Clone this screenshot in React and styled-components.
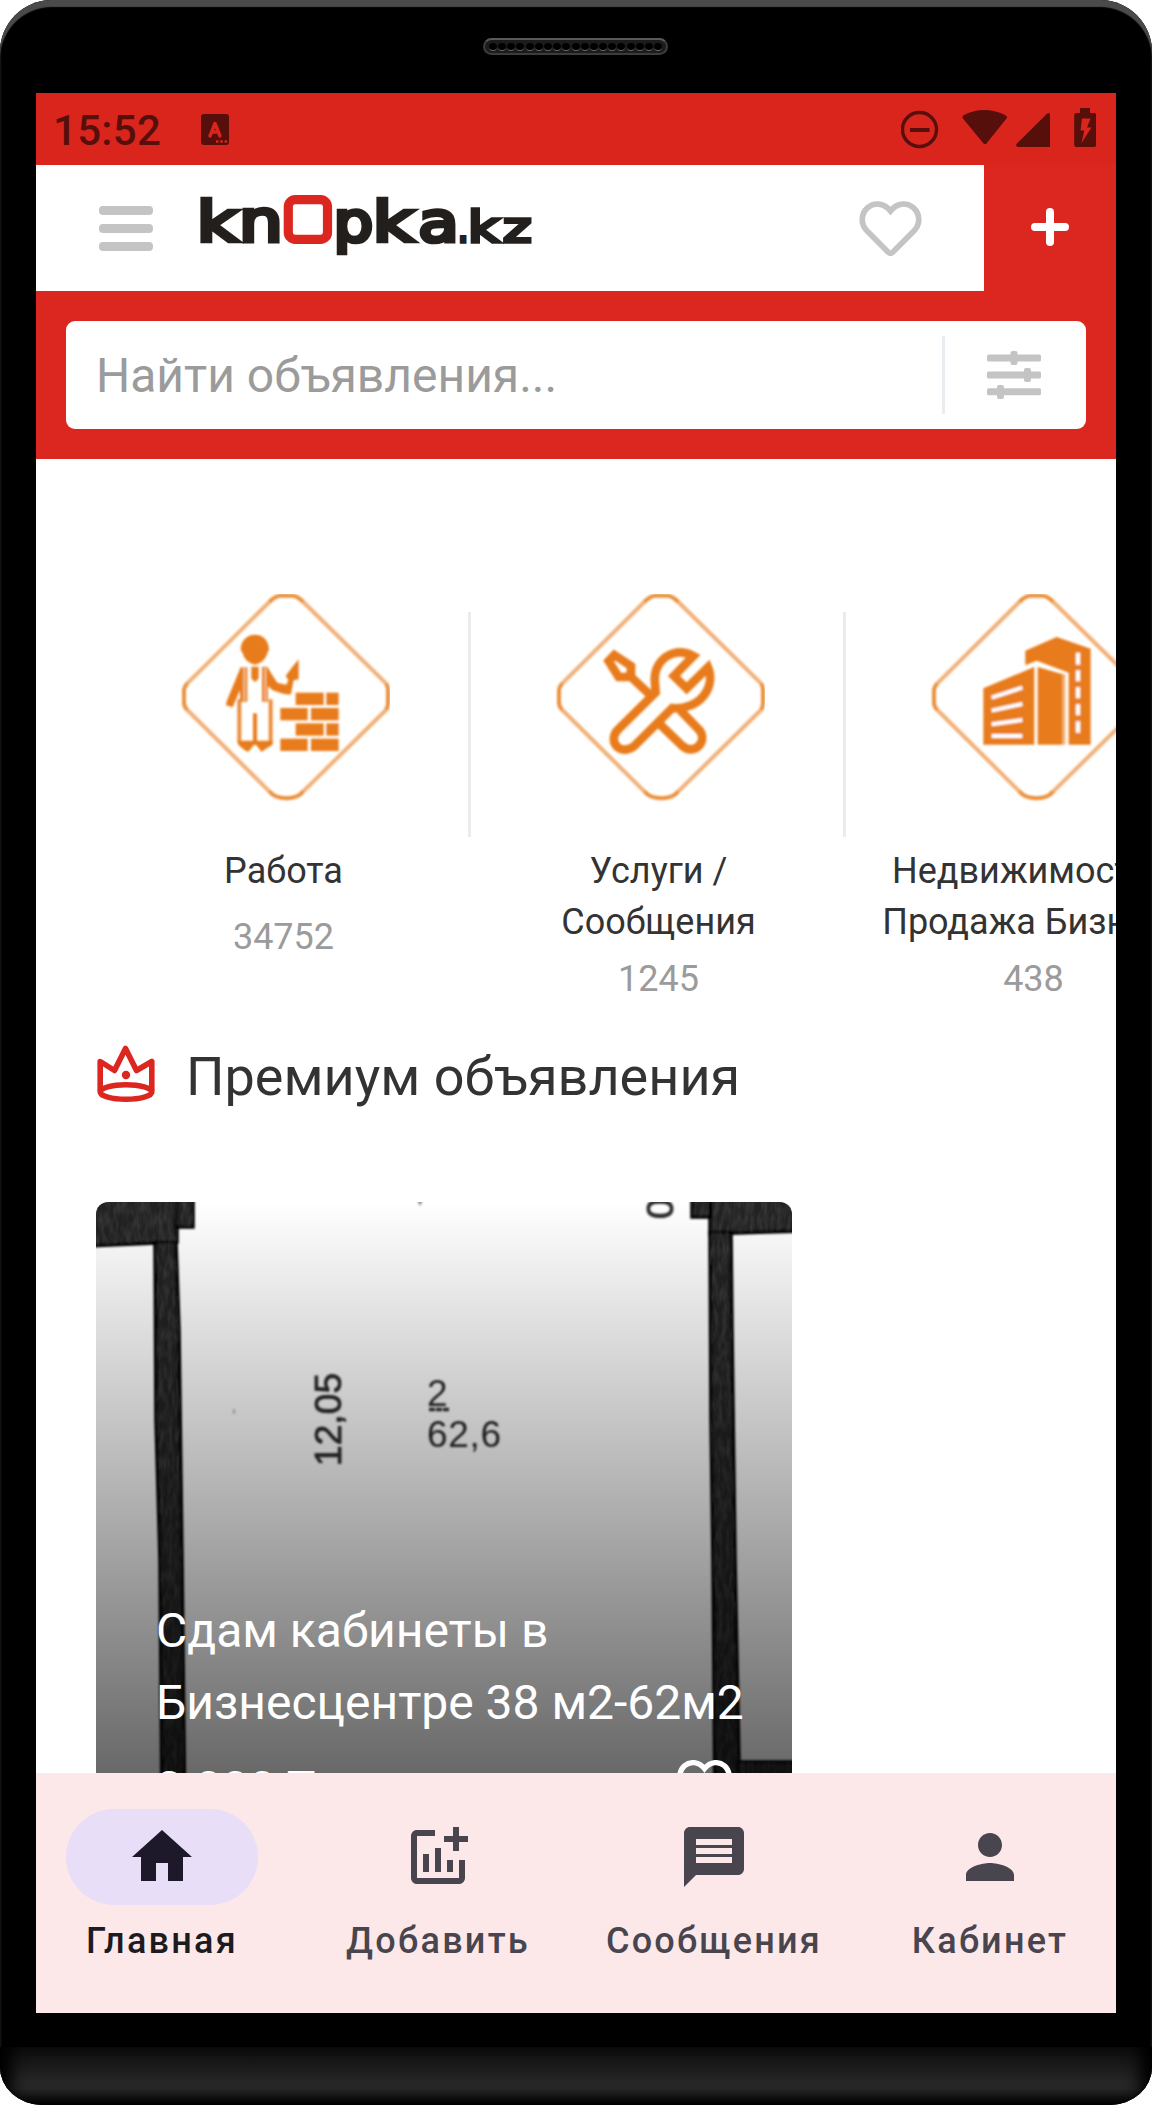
import React from "react";
import styled, { createGlobalStyle } from "styled-components";

const RED = "#db2720";
const STATUS_RED = "#da251d";
const DARK_RED = "#570f0c";
const GREY = "#c4c4c4";
const ORANGE = "#e87c1b";

const GlobalStyle = createGlobalStyle`
  *, *::before, *::after { box-sizing: border-box; }
  html, body { margin: 0; background: #fff; }
  body { font-family: Roboto, "Noto Sans", sans-serif; }
  svg { display: block; flex: none; }
`;

const Phone = styled.div`
  width: 1152px;
  height: 2105px;
  display: flex;
  flex-direction: column;
  background: #000;
  border-radius: 52px 52px 42px 42px / 52px 52px 38px 38px;
  overflow: hidden;
  box-shadow: inset 0 7px 1px #4a4a4a, inset 1px 0 2px #141414, inset -1px 0 2px #141414;
`;

const Bezel = styled.div`
  height: 93px;
  flex: none;
  display: flex;
  justify-content: center;
  padding: 38px 1px 0 0;
`;

const Speaker = styled.div`
  width: 185px;
  height: 17px;
  border-radius: 9px;
  border: 2px solid #3c3c3c;
  border-top-color: #5a5a5a;
  background: #1c1c1c;
  display: flex;
  align-items: center;
  justify-content: center;
  gap: 1.2px;
`;

const Hole = styled.span`
  width: 8px;
  height: 8px;
  border-radius: 50%;
  background: #000;
  border-bottom: 1px solid #6a6a6a;
`;

const Chin = styled.div`
  margin-top: 34px;
  height: 58px;
  flex: none;
  background: linear-gradient(#0c0c0c, #262626 60%, #262626 72%, #000);
  box-shadow: inset 22px 0 16px -10px #000, inset -22px 0 16px -10px #000;
`;

const Screen = styled.main`
  width: 1080px;
  height: 1920px;
  flex: none;
  margin: 0 auto;
  background: #fff;
  display: flex;
  flex-direction: column;
  overflow: hidden;
`;

const StatusBar = styled.div`
  height: 72px;
  flex: none;
  display: flex;
  align-items: center;
  padding: 0 20px 0 17px;
  background: ${STATUS_RED};
  color: ${DARK_RED};
`;

const Clock = styled.span`
  font-size: 42px;
  font-weight: 500;
  line-height: 49px;
  letter-spacing: 0.3px;
  width: 148px;
  padding-top: 3px;
`;

const StatusIcons = styled.div`
  margin-left: auto;
  display: flex;
`;

const Header = styled.header`
  height: 126px;
  flex: none;
  display: flex;
`;

const Brand = styled.div`
  flex: 1;
  display: flex;
  align-items: center;
  padding: 0 62px 0 63px;
`;

const Burger = styled.div`
  display: flex;
  flex-direction: column;
  gap: 9px;
  width: 54px;
  margin-right: 44px;
`;

const BurgerBar = styled.span`
  height: 9px;
  border-radius: 4px;
  background: ${GREY};
`;

const HeaderHeart = styled.div`
  margin-left: auto;
  padding-top: 1px;
`;

const AddButton = styled.div`
  width: 132px;
  background: ${RED};
  display: flex;
  align-items: center;
  justify-content: center;
  padding-bottom: 2px;
`;

const SearchBand = styled.div`
  height: 168px;
  flex: none;
  padding: 30px;
  background: ${RED};
`;

const SearchBox = styled.div`
  height: 108px;
  border-radius: 9px;
  background: #fff;
  display: flex;
  align-items: center;
`;

const Placeholder = styled.span`
  flex: 1;
  padding-left: 30px;
  font-size: 48px;
  line-height: 57px;
  color: #9b9b9b;
`;

const SearchDivider = styled.span`
  width: 3px;
  height: 78px;
  background: #e7edf1;
`;

const FilterSlot = styled.div`
  width: 141px;
  display: flex;
  justify-content: center;
  padding-right: 3px;
`;

const Content = styled.div`
  flex: 1;
  min-height: 0;
  overflow: hidden;
`;

const Categories = styled.div`
  height: 586px;
  padding: 135px 0 0 60px;
  display: flex;
`;

const Category = styled.div`
  flex: none;
  width: 375px;
  display: flex;
`;

const CategoryBody = styled.div`
  width: 372px;
  padding-left: 3px;
  display: flex;
  flex-direction: column;
  align-items: center;
`;

const CategoryRule = styled.span`
  width: 3px;
  height: 225px;
  margin-top: 18px;
  background: #ebebeb;
`;

const CategoryName = styled.div`
  margin-top: 42px;
  min-height: 60px;
  font-size: 36px;
  line-height: 51px;
  text-align: center;
  white-space: pre;
  color: #333;
`;

const CategoryCount = styled.div`
  margin-top: 10px;
  font-size: 36px;
  line-height: 42px;
  color: #9b9b9b;
`;

const SectionTitle = styled.h2`
  margin: 0 0 94px;
  padding-left: 60px;
  height: 63px;
  display: flex;
  gap: 29px;
  font-size: 54px;
  line-height: 63px;
  font-weight: 400;
  color: #333;
`;

const Card = styled.article`
  width: 696px;
  height: 720px;
  margin-left: 60px;
  border-radius: 12px;
  overflow: hidden;
  display: grid;
  > * { grid-area: 1 / 1; }
`;

const CardText = styled.div`
  padding: 393px 0 0 60px;
  z-index: 1;
  color: #fff;
  background: linear-gradient(rgba(0, 0, 0, 0), rgba(0, 0, 0, 0.745));
  font-size: 48px;
  line-height: 72px;
`;

const CardTitle = styled.div`
  white-space: pre;
`;

const PriceRow = styled.div`
  margin-top: 14px;
  padding-right: 60px;
  display: flex;
  justify-content: space-between;
  align-items: flex-start;
  svg { margin-top: 7px; }
`;

const NavBar = styled.nav`
  height: 240px;
  flex: none;
  display: flex;
  gap: 24px;
  background: #fce8e9;
`;

const NavItem = styled.div`
  flex: 1;
  padding-top: 36px;
  display: flex;
  flex-direction: column;
  align-items: center;
  color: ${(p) => (p.$active ? "#1c1b1f" : "#49454f")};
`;

const NavPill = styled.div`
  width: 192px;
  height: 96px;
  border-radius: 48px;
  display: flex;
  align-items: center;
  justify-content: center;
  background: ${(p) => (p.$active ? "#e8def7" : "transparent")};
  color: ${(p) => (p.$active ? "#1d192b" : "inherit")};
`;

const NavLabel = styled.span`
  margin-top: 12px;
  font-size: 36px;
  font-weight: 500;
  line-height: 48px;
  letter-spacing: 2.25px;
  white-space: nowrap;
`;

const KeyboardIcon = () => (
  <svg width="28" height="31" viewBox="0 0 28 31">
    <rect width="28" height="31" rx="3" fill={DARK_RED} />
    <path d="M9 22 14 9.500 19 22M10.500 18H17.500" fill="none" stroke={STATUS_RED} strokeWidth="3.400" strokeLinecap="round" strokeLinejoin="round" />
    <path d="M15 27.500h2.500M19.300 27.500h2.500M23.600 27.500h2.500" stroke={STATUS_RED} strokeWidth="2.300" />
  </svg>
);

const SystemIcons = () => (
  <svg width="195" height="42" viewBox="0 0 195 42" fill={DARK_RED}>
    <circle cx="18.500" cy="21.500" r="17" fill="none" stroke={DARK_RED} strokeWidth="3.400" />
    <rect x="9" y="20" width="19.500" height="4" />
    <path d="M62 10.500Q60.500 8.500 63 7Q83 -3 104 7Q107 8.500 105.500 10.500L85.500 35.500Q84 37 82.500 35.500Z" />
    <path d="M117 39Q114 38 116 35.500L146 5.700Q149 4 149 7V39Z" />
    <path fillRule="evenodd" d="M179 0h10v5h4q2.300 0 2.300 2.300V36.500q0 2.500-2.300 2.500h-17.500q-2.300 0-2.300-2.500V7.300q0-2.300 2.300-2.300H179ZM181 10.500 179.500 22.500h3.800L180.500 35 190.500 19.500h-4.500L189.500 10.500Z" />
  </svg>
);

const HeartIcon = ({ width, color, stroke }) => (
  <svg width={width} height={(width * 55) / 62} viewBox="0 0 62 55" fill="none">
    <path
      d="M31 9.800C38 1.200 47.500 1.500 53.500 6.500C60.500 13 60.500 23 54 29.500L33.500 50.200Q31 52.500 28.500 50.200L8 29.500C1.500 23 1.500 13 8.500 6.500C14.500 1.500 24 1.200 31 9.800Z"
      stroke={color}
      strokeWidth={stroke}
    />
  </svg>
);

const LOGO_LETTERS = [
  { ch: "k", x: 0, w: 39, size: 56, box: 0.49, bear: 0.091 },
  { ch: "n", x: 42, w: 36, size: 56, box: 0.458, bear: 0.091 },
  { ch: "p", x: 136, w: 35, size: 56, box: 0.489, bear: 0.091 },
  { ch: "k", x: 176, w: 39, size: 56, box: 0.49, bear: 0.091 },
  { ch: "a", x: 219, w: 35, size: 56, box: 0.462, bear: 0.06 },
  { ch: ".", x: 258.500, w: 8, size: 43, box: 0.124, bear: 0.107 },
  { ch: "k", x: 270, w: 30, size: 43, box: 0.49, bear: 0.091 },
  { ch: "z", x: 302.500, w: 27.500, size: 43, box: 0.439, bear: 0.043 },
];

const Logo = () => (
  <svg width="339" height="90" viewBox="-4 -9 339 90" overflow="visible" role="img" aria-label="knOpka.kz">
    <rect x="87.300" y="7.600" width="39.200" height="39.800" rx="7" fill="none" stroke={RED} strokeWidth="9.200" />
    {LOGO_LETTERS.map((l, i) => {
      const pen = l.size > 50 ? 4.4 : 3.6;
      const sx = (l.w - pen) / (l.box * l.size);
      return (
        <text
          key={i}
          transform={`translate(${l.x + pen / 2 - l.bear * l.size * sx} ${51.5 - pen / 2}) scale(${sx} 1)`}
          fontFamily="'DejaVu Sans', sans-serif"
          fontSize={l.size}
          fill="#231f1c"
          stroke="#231f1c"
          strokeWidth={pen}
        >
          {l.ch}
        </text>
      );
    })}
  </svg>
);

const FilterIcon = () => (
  <svg width="54" height="49" viewBox="0 0 54 49" fill={GREY}>
    <rect y="3.500" width="54" height="7" rx="1.500" />
    <rect y="20.500" width="54" height="7" rx="1.500" />
    <rect y="37.300" width="54" height="7" rx="1.500" />
    <rect x="23.500" width="7" height="14" rx="2" />
    <rect x="37" y="17" width="7" height="14" rx="2" />
    <rect x="10" y="34" width="7" height="14" rx="2" />
  </svg>
);

const CrownIcon = () => (
  <svg width="61" height="63" viewBox="0 0 61 63" fill="none" stroke={RED} strokeWidth="5.600" strokeLinejoin="round">
    <path d="M4.200 46V16.500L18.500 25.500 29.500 3.500 40.500 25.500 55.800 16.500V46" />
    <ellipse cx="30" cy="47" rx="25.800" ry="7.300" />
    <circle cx="30" cy="30" r="4.200" fill={RED} stroke="none" />
  </svg>
);

const Diamond = ({ children, dx }) => (
  <svg width="213" height="210" viewBox="-9 0 639 630">
    <g fill="none" stroke={ORANGE} filter="url(#soft)">
      <path opacity="0.600" d="M22 268 268 24M370 24 618 268M618 348 370 592M268 592 22 348" strokeWidth="12" />
      <path opacity="0.850" strokeWidth="12" d="M22 268Q12 280 12 290V326Q12 338 22 348M268 24Q286 5 302 5H336Q352 5 370 24M618 268Q624 276 624 288V326Q624 340 618 348M370 592Q354 613 320 613Q284 613 268 592" />
    </g>
    <g transform={`translate(${dx} -72)`} filter="url(#soft)">
      {children}
    </g>
  </svg>
);

const WorkerIcon = () => (
  <Diamond dx={-90}>
    <g fill={ORANGE}>
      <path d="M272 240c0-28 18-46 43-46s42 18 42 46l-5 9c-3 17-18 31-37 35-19-4-34-18-37-35z" />
      <path d="M272 292h20v103h-22v-35l-22 52-20-6 2-12z" />
      <path d="M304 290h22v35l-11 12-11-12z" />
      <path d="M336 290h16q16 28 30 48l27 6 6-14-8-12q18-26 39-50v60l-15 3-8 42q-14 4-55-12l-14-12v46h-18z" />
      <path d="M262 512h106v12l-22 14-11 8-17-22h-6l-17 22-12-6-17-14z" />
      {[368, 460].map((y) => (
        <React.Fragment key={y}>
          <rect x="437" y={y} width="84" height="37" />
          <rect x="529" y={y} width="37" height="37" />
          <rect x="391" y={y + 46} width="82" height="37" />
          <rect x="483" y={y + 46} width="83" height="37" />
        </React.Fragment>
      ))}
    </g>
    <path d="M283 292v100M346 292v100" stroke="#fff" strokeOpacity="0.550" strokeWidth="6" />
    <path d="M268 388V520M362 388V520" stroke={ORANGE} strokeWidth="12" opacity="0.850" />
    <path d="M315 430V525" stroke={ORANGE} strokeWidth="12" />
  </Diamond>
);

const ToolsIcon = () => (
  <Diamond dx={-165}>
    <g fill="none" stroke={ORANGE} strokeWidth="26" strokeLinejoin="round">
      <path d="M343 255 393 288V310L382 321H356L326 273Z" strokeLinejoin="miter" />
      <path d="M388 316 452 376" />
      <path strokeLinejoin="miter" strokeMiterlimit="2" d="M467 367 353 480C338 496 338 517 351 530C366 543 388 541 402 529L517 414C550 418 590 405 612 376C632 350 635 318 624 292L560 355 522 318 580 258Q550 242 520 250C480 262 460 300 465 342Z" />
      <path d="M477 460 546 527C563 543 585 541 598 526C611 511 608 492 597 479L540 420" />
    </g>
  </Diamond>
);

const BuildingsIcon = () => (
  <Diamond dx={-270}>
    <g fill={ORANGE}>
      <path d="M430 355 583 291V524H430Z" />
      <path d="M593 291 666 312V524H593Z" />
      <path d="M556 242 650 201 752 236V524H686V308L590 272 556 286Z" />
      <path opacity="0.600" d="M666 312H676V524H666Z" />
    </g>
    <path d="M455 383 547 353M455 422 547 402M455 463 547 450M455 498H547" stroke="#fff" strokeWidth="12" />
    <path d="M714 248V284M714 301V334M714 352V385M714 403V436M714 454V488" stroke="#fff" strokeWidth="13" />
  </Diamond>
);

const FloorPlan = () => (
  <svg width="696" height="720" viewBox="96 1202 696 720">
    <defs>
      <filter id="scan" x="0" y="0" width="1" height="1">
        <feGaussianBlur stdDeviation="1" />
      </filter>
      <filter id="grain" x="0" y="0" width="1" height="1">
        <feTurbulence type="fractalNoise" baseFrequency="0.22 0.07" numOctaves="2" seed="4" />
        <feColorMatrix values="0 0 0 0 1  0 0 0 0 1  0 0 0 0 1  0.6 0 0 0 -0.2" />
        <feComposite in2="SourceGraphic" operator="in" />
      </filter>
      <filter id="soft">
        <feGaussianBlur stdDeviation="2.4" />
      </filter>
      <g id="walls">
        <path d="M90 1195H177V1242L90 1246Z" />
        <path d="M176 1195H193V1227H176Z" />
        <path d="M155 1242H176L179 1330 182 1560 186 1930H163L160 1560 156 1420Z" />
        <path d="M710 1195H800V1231L710 1234Z" />
        <path d="M692 1195H710V1217H692Z" />
        <path d="M710 1232H731L732 1330 735 1560 739 1763 742 1930H716L713 1560 711 1420Z" />
        <path d="M738 1762H800V1930H738Z" />
      </g>
    </defs>
    <rect x="96" y="1202" width="696" height="720" fill="#fff" />
    <g filter="url(#scan)">
      <use href="#walls" fill="#242424" stroke="#050505" strokeWidth="3.500" />
      <g fill="#2b2b2b" fontFamily="'Liberation Sans', Arial, sans-serif" fontSize="37">
        <text transform="translate(341 1466) rotate(-90)" textLength="93" stroke="#2b2b2b" strokeWidth="0.900">12,05</text>
        <text x="427" y="1406">2</text>
        <text x="427" y="1447" textLength="74">62,6</text>
        <text transform="translate(672.500 1219) rotate(-90)" stroke="#2b2b2b">0</text>
      </g>
      <path d="M429 1409.500H449" stroke="#333" strokeWidth="3.500" strokeDasharray="6 1" />
      <path d="M417 1200H423L420 1206Z" fill="#888" />
      <path d="M234 1409V1414" stroke="#aaa" strokeWidth="1.500" />
    </g>
    <use href="#walls" fill="#fff" filter="url(#grain)" opacity="0.350" />
  </svg>
);

const CATEGORIES = [
  { name: "Работа", count: "34752", Icon: WorkerIcon },
  { name: "Услуги /\nСообщения", count: "1245", Icon: ToolsIcon },
  { name: "Недвижимость /\nПродажа Бизнеса", count: "438", Icon: BuildingsIcon },
];

const NAV = [
  { label: "Главная", active: true, d: "M10 20v-6h4v6h5v-8h3L12 3 2 12h3v8z" },
  {
    label: "Добавить",
    d: "M22 5v2h-3v3h-2V7h-3V5h3V2h2v3h3zm-3 14H5V5h6V3H5c-1.100 0-2 .9-2 2v14c0 1.100.9 2 2 2h14c1.100 0 2-.9 2-2v-6h-2v6zm-4-6v4h2v-4h-2zm-4 4h2V9h-2v8zm-2 0v-6H7v6h2z",
  },
  {
    label: "Сообщения",
    d: "M20 2H4c-1.100 0-1.990.9-1.990 2L2 22l4-4h14c1.100 0 2-.9 2-2V4c0-1.100-.9-2-2-2zm-2 12H6v-2h12v2zm0-3H6V9h12v2zm0-3H6V6h12v2z",
  },
  {
    label: "Кабинет",
    d: "M12 12c2.210 0 4-1.790 4-4s-1.790-4-4-4-4 1.790-4 4 1.790 4 4 4zm0 2c-2.670 0-8 1.340-8 4v2h16v-2c0-2.660-5.330-4-8-4z",
  },
];

export default function App() {
  return (
    <Phone>
      <GlobalStyle />
      <Bezel>
        <Speaker>
          {Array.from({ length: 19 }, (_, i) => (
            <Hole key={i} />
          ))}
        </Speaker>
      </Bezel>
      <Screen>
        <StatusBar>
          <Clock>15:52</Clock>
          <KeyboardIcon />
          <StatusIcons>
            <SystemIcons />
          </StatusIcons>
        </StatusBar>
        <Header>
          <Brand>
            <Burger>
              <BurgerBar />
              <BurgerBar />
              <BurgerBar />
            </Burger>
            <Logo />
            <HeaderHeart>
              <HeartIcon width={63} color={GREY} stroke={5.6} />
            </HeaderHeart>
          </Brand>
          <AddButton>
            <svg width="38" height="38" viewBox="0 0 38 38">
              <path d="M4 19H34M19 4V34" stroke="#fff" strokeWidth="8" strokeLinecap="round" />
            </svg>
          </AddButton>
        </Header>
        <SearchBand>
          <SearchBox>
            <Placeholder>Найти объявления...</Placeholder>
            <SearchDivider />
            <FilterSlot>
              <FilterIcon />
            </FilterSlot>
          </SearchBox>
        </SearchBand>
        <Content>
          <Categories>
            {CATEGORIES.map(({ name, count, Icon }) => (
              <Category key={name}>
                <CategoryBody>
                  <Icon />
                  <CategoryName>{name}</CategoryName>
                  <CategoryCount>{count}</CategoryCount>
                </CategoryBody>
                <CategoryRule />
              </Category>
            ))}
          </Categories>
          <SectionTitle>
            <CrownIcon />
            Премиум объявления
          </SectionTitle>
          <Card>
            <FloorPlan />
            <CardText>
              <CardTitle>{"Сдам кабинеты в\nБизнесцентре 38 м2-62м2"}</CardTitle>
              <PriceRow>
                <span>3 000 Тг</span>
                <HeartIcon width={55} color="#fff" stroke={6} />
              </PriceRow>
            </CardText>
          </Card>
        </Content>
        <NavBar>
          {NAV.map(({ label, active, d }) => (
            <NavItem key={label} $active={active}>
              <NavPill $active={active}>
                <svg width="72" height="72" viewBox="0 0 24 24" fill="currentColor">
                  <path d={d} />
                </svg>
              </NavPill>
              <NavLabel>{label}</NavLabel>
            </NavItem>
          ))}
        </NavBar>
      </Screen>
      <Chin />
    </Phone>
  );
}
